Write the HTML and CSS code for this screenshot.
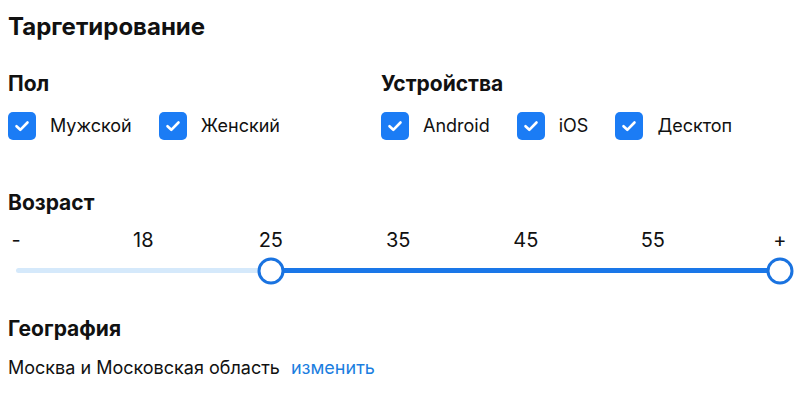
FILE: index.html
```html
<!DOCTYPE html>
<html lang="ru">
<head>
<meta charset="utf-8">
<link rel="stylesheet" href="styles.css">
</head>
<body>
<div class="page">
  <h1 class="title">Таргетирование</h1>
  <div class="groups">
    <div class="group group-sex">
      <h2 class="heading">Пол</h2>
      <div class="checks">
        <label class="check"><span class="box"><svg viewBox="0 0 28 28" width="28" height="28"><path d="M8.5 14.2l3.8 3.6 7.2-7.3" fill="none" stroke="#fff" stroke-width="2.6" stroke-linecap="round" stroke-linejoin="round"/></svg></span><span class="check-text">Мужской</span></label>
        <label class="check"><span class="box"><svg viewBox="0 0 28 28" width="28" height="28"><path d="M8.5 14.2l3.8 3.6 7.2-7.3" fill="none" stroke="#fff" stroke-width="2.6" stroke-linecap="round" stroke-linejoin="round"/></svg></span><span class="check-text">Женский</span></label>
      </div>
    </div>
    <div class="group group-dev">
      <h2 class="heading">Устройства</h2>
      <div class="checks">
        <label class="check"><span class="box"><svg viewBox="0 0 28 28" width="28" height="28"><path d="M8.5 14.2l3.8 3.6 7.2-7.3" fill="none" stroke="#fff" stroke-width="2.6" stroke-linecap="round" stroke-linejoin="round"/></svg></span><span class="check-text">Android</span></label>
        <label class="check"><span class="box"><svg viewBox="0 0 28 28" width="28" height="28"><path d="M8.5 14.2l3.8 3.6 7.2-7.3" fill="none" stroke="#fff" stroke-width="2.6" stroke-linecap="round" stroke-linejoin="round"/></svg></span><span class="check-text">iOS</span></label>
        <label class="check"><span class="box"><svg viewBox="0 0 28 28" width="28" height="28"><path d="M8.5 14.2l3.8 3.6 7.2-7.3" fill="none" stroke="#fff" stroke-width="2.6" stroke-linecap="round" stroke-linejoin="round"/></svg></span><span class="check-text">Десктоп</span></label>
      </div>
    </div>
  </div>
  <h2 class="heading heading-age">Возраст</h2>
  <div class="slider">
    <div class="ticks">
      <span class="tick">-</span>
      <span class="tick">18</span>
      <span class="tick">25</span>
      <span class="tick">35</span>
      <span class="tick">45</span>
      <span class="tick">55</span>
      <span class="tick">+</span>
    </div>
    <div class="track">
      <div class="fill" style="left:33.333%;width:66.667%"></div>
      <span class="thumb" style="left:33.333%"></span>
      <span class="thumb" style="left:100%"></span>
    </div>
  </div>
  <h2 class="heading heading-geo">География</h2>
  <p class="geo">Москва и Московская область <a class="link" href="#">изменить</a></p>
</div>
</body>
</html>
```

FILE: styles.css
```css
html, body {
  margin: 0;
  padding: 0;
  background: #fff;
}
body {
  font-family: Inter, "Noto Sans", "Liberation Sans", sans-serif;
  color: #111;
}
.page {
  padding: 12px 8px 0 8px;
  width: 784px;
}
.title {
  margin: 0;
  font-size: 24px;
  font-weight: 700;
  line-height: 30px;
}
.groups {
  display: flex;
  margin-top: 29px;
}
.group-sex {
  width: 373px;
}
.heading {
  margin: 0;
  font-size: 21px;
  font-weight: 700;
  line-height: 26px;
}
.checks {
  display: flex;
  gap: 27px;
  margin-top: 15px;
}
.check {
  display: flex;
  align-items: center;
  gap: 14px;
  font-size: 18px;
  line-height: 28px;
}
.box {
  width: 28px;
  height: 28px;
  border-radius: 5px;
  background: #1b7cf5;
  display: block;
}
.box svg {
  display: block;
}
.heading-age {
  margin-top: 50px;
}
.slider {
  margin: 12px -4px 0 -4px;
  width: 788px;
}
.ticks {
  display: flex;
  justify-content: space-between;
}
.tick {
  width: 24px;
  text-align: center;
  font-size: 20px;
  line-height: 24px;
}
.track {
  position: relative;
  margin: 16px 12px 0 12px;
  height: 5px;
  border-radius: 3px;
  background: #d5e9fb;
}
.fill {
  position: absolute;
  top: 0;
  bottom: 0;
  background: #1a77e8;
}
.thumb {
  position: absolute;
  top: 50%;
  width: 21px;
  height: 21px;
  border: 3px solid #1a73e0;
  border-radius: 50%;
  background: #fff;
  transform: translate(-50%, -50%);
}
.heading-geo {
  margin-top: 43px;
}
.geo {
  margin: 14px 0 0 0;
  font-size: 18px;
  line-height: 24px;
}
.link {
  color: #1b7ee0;
  text-decoration: none;
  margin-left: 6px;
}
```
